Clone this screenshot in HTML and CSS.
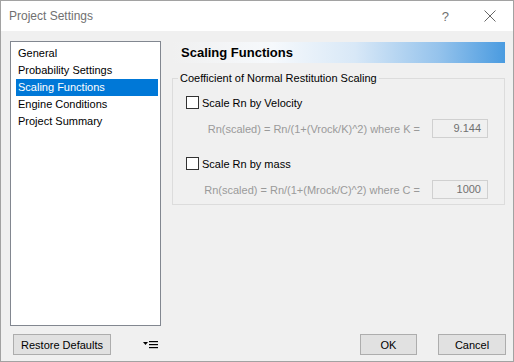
FILE: index.html
```html
<!DOCTYPE html>
<html>
  <head>
    <meta charset="utf-8" />
    <title>Project Settings</title>
    <link rel="stylesheet" href="styles.css">
  </head>
  <body>
    <div class="window">
      <!-- title bar -->
      <div class="titleBar">
        <span class="titleText">Project Settings</span>
        <span class="helpButton">?</span>
        <svg class="closeButton" width="12" height="12" viewBox="0 0 12 12">
          <path d="M0.5 0.5 L11.5 11.5 M11.5 0.5 L0.5 11.5" stroke="#666" stroke-width="1" fill="none"/>
        </svg>
      </div>

      <div class="mainArea">
        <ul class="pageList">
          <li>General</li>
          <li>Probability Settings</li>
          <li class="selected">Scaling Functions</li>
          <li>Engine Conditions</li>
          <li>Project Summary</li>
        </ul>

        <div class="pagePanel">
          <div class="pageHeader">Scaling Functions</div>

          <fieldset class="groupBox">
            <legend>Coefficient of Normal Restitution Scaling</legend>

            <label class="checkRow">
              <span class="checkBox"></span>
              Scale Rn by Velocity
            </label>
            <div class="formulaRow">
              <span class="formula">Rn(scaled) = Rn/(1+(Vrock/K)^2) where K =</span>
              <span class="valueBox">9.144</span>
            </div>

            <label class="checkRow">
              <span class="checkBox"></span>
              Scale Rn by mass
            </label>
            <div class="formulaRow">
              <span class="formula">Rn(scaled) = Rn/(1+(Mrock/C)^2) where C =</span>
              <span class="valueBox">1000</span>
            </div>
          </fieldset>
        </div>
      </div>

      <div class="footer">
        <button class="dlgButton restoreButton">Restore Defaults</button>
        <svg class="menuIcon" width="15" height="8" viewBox="0 0 15 8">
          <path d="M0 1 L5 1 L2.5 4 Z" fill="#000"/>
          <rect x="6" y="0" width="9" height="1.2" fill="#000"/>
          <rect x="6" y="3" width="9" height="1.2" fill="#000"/>
          <rect x="6" y="6" width="9" height="1.2" fill="#000"/>
        </svg>
        <div class="spacer"></div>
        <button class="dlgButton okButton">OK</button>
        <button class="dlgButton cancelButton">Cancel</button>
      </div>
    </div>
  </body>
</html>
```

FILE: styles.css
```css
body {
  margin: 0;
  font-family: "Liberation Sans", Arial, sans-serif;
  font-size: 11px;
  color: #000;
}

.window {
  width: 514px;
  height: 362px;
  box-sizing: border-box;
  border: 1px solid #a2a2a2;
  background-color: #f0f0f0;
  display: flex;
  flex-direction: column;
}

/* title bar */
.titleBar {
  height: 30px;
  background-color: #fff;
  display: flex;
  align-items: center;
  padding-left: 8px;
}
.titleText {
  font-size: 12px;
  color: #707070;
  flex: 1;
}
.helpButton {
  font-size: 13px;
  color: #707070;
  margin-right: 35px;
}
.closeButton {
  margin-right: 17px;
}

/* main area */
.mainArea {
  display: flex;
  padding: 10px 8px 0 9px;
  gap: 11px;
}

.pageList {
  list-style: none;
  margin: 0;
  padding: 3px 2px 0 5px;
  width: 151px;
  height: 285px;
  box-sizing: border-box;
  border: 1px solid #828790;
  background-color: #fff;
}
.pageList li {
  height: 17px;
  line-height: 17px;
  padding-left: 2px;
}
.pageList li.selected {
  background-color: #0078d7;
  color: #fff;
}

.pagePanel {
  flex: 1;
  padding-top: 1px;
}
.pageHeader {
  height: 21px;
  line-height: 21px;
  padding-left: 9px;
  font-weight: bold;
  font-size: 13px;
  background: linear-gradient(to right, #f0f0f0 0%, #f6f9fc 30%, #d8e8f7 55%, #95c3ec 80%, #4a9be0 100%);
}

.groupBox {
  margin: 9px 0 0 0;
  padding: 11px 0 0 13px;
  height: 133px;
  box-sizing: border-box;
  border: 1px solid #dcdcdc;
}
.groupBox legend {
  padding: 0 2px;
  margin-left: -8px;
}

.checkRow {
  display: flex;
  align-items: center;
  height: 15px;
  gap: 3px;
}
.checkBox {
  width: 11px;
  height: 11px;
  border: 1px solid #333;
  background-color: #fff;
}

.formulaRow {
  display: flex;
  align-items: center;
  justify-content: flex-end;
  padding-right: 16px;
  margin: 9px 0 18px 0;
}
.formula {
  color: #9a9a9a;
  margin-right: 12px;
}
.valueBox {
  width: 56px;
  height: 19px;
  box-sizing: border-box;
  border: 1px solid #d0d0d0;
  line-height: 17px;
  text-align: right;
  padding-right: 6px;
  color: #707070;
}

/* footer */
.footer {
  display: flex;
  align-items: center;
  padding: 8px 7px 0 12px;
}
.dlgButton {
  height: 21px;
  box-sizing: border-box;
  border: 1px solid #adadad;
  background-color: #e1e1e1;
  font-family: "Liberation Sans", Arial, sans-serif;
  font-size: 11px;
  color: #000;
  padding: 0;
}
.restoreButton {
  width: 98px;
}
.menuIcon {
  margin-left: 32px;
}
.spacer {
  flex: 1;
}
.okButton {
  width: 57px;
  margin-right: 21px;
}
.cancelButton {
  width: 68px;
}
```
